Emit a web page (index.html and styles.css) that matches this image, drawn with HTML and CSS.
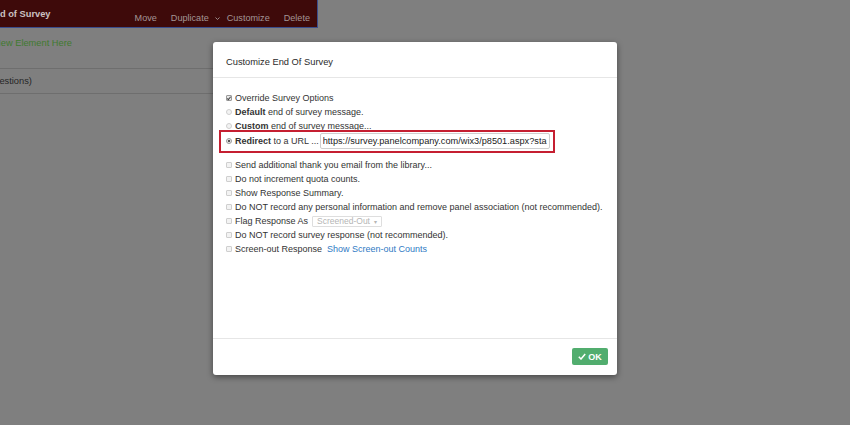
FILE: index.html
```html
<!DOCTYPE html>
<html lang="en">
<head>
    <meta charset="UTF-8">
    <meta name="viewport" content="width=device-width, initial-scale=1.0">
    <title>Customize End Of Survey</title>
    <link rel="stylesheet" href="styles.css">
</head>
<body>
    <div class="survey">
        <div class="block-bar">
            <span class="block-title">End of Survey</span>
            <div class="block-actions">
                <span>Move</span>
                <span>Duplicate</span>
                <svg class="caret" width="5" height="3" viewBox="0 0 5 3"><path d="M0.5 0.5 L2.5 2.5 L4.5 0.5" fill="none" stroke="#a49696" stroke-width="0.9"/></svg>
                <span>Customize</span>
                <span>Delete</span>
            </div>
        </div>
        <div class="insert">New Element Here</div>
        <div class="block-row"><span class="count">Questions)</span></div>
    </div>

    <div class="modal">
        <div class="modal-header">Customize End Of Survey</div>
        <div class="modal-body">
            <div class="opt-group">
                <div class="opt"><span class="box checked"></span>Override Survey Options</div>
                <div class="opt"><span class="radio"></span><b>Default</b>&nbsp;end of survey message.</div>
                <div class="opt"><span class="radio"></span><b>Custom</b>&nbsp;end of survey message...</div>
                <div class="opt redirect">
                    <span class="radio on"></span><b>Redirect</b>&nbsp;to a URL ...
                    <input class="url" type="text" readonly value="https://survey.panelcompany.com/wix3/p8501.aspx?sta">
                </div>
            </div>
            <div class="opt-group second">
                <div class="opt"><span class="box"></span>Send additional thank you email from the library...</div>
                <div class="opt"><span class="box"></span>Do not increment quota counts.</div>
                <div class="opt"><span class="box"></span>Show Response Summary.</div>
                <div class="opt"><span class="box"></span>Do NOT record any personal information and remove panel association (not recommended).</div>
                <div class="opt"><span class="box"></span>Flag Response As <span class="select">Screened-Out <span class="arrow">&#9662;</span></span></div>
                <div class="opt"><span class="box"></span>Do NOT record survey response (not recommended).</div>
                <div class="opt"><span class="box"></span>Screen-out Response <a href="#" class="link">Show Screen-out Counts</a></div>
            </div>
        </div>
        <div class="modal-footer">
            <button type="button" class="ok">
                <svg width="8" height="7" viewBox="0 0 8 7"><path d="M0.8 3.8 L3 6 L7.2 1" fill="none" stroke="#fff" stroke-width="1.5"/></svg>
                OK
            </button>
        </div>
    </div>
</body>
</html>
```

FILE: styles.css
```css
* {
    box-sizing: border-box;
    margin: 0;
    padding: 0;
    font-family: 'Liberation Sans', Arial, sans-serif;
}

body {
    background-color: #7f7f7f;
    width: 850px;
    height: 425px;
    overflow: hidden;
    position: relative;
    color: #333;
    font-size: 9px;
}

/* page behind the overlay */

.survey {
    width: 318px;
    overflow: hidden;
}

.block-bar {
    height: 28px;
    background-color: #3e0a0a;
    border-right: 1px solid #3b4d8c;
    border-bottom: 1px solid #3b4d8c;
    display: flex;
    justify-content: space-between;
    padding-right: 7px;
}

.block-title {
    margin-left: -12px;
    margin-top: 8px;
    font-weight: bold;
    font-size: 9.3px;
    line-height: 12px;
    color: #cbc2c2;
}

.block-actions {
    display: flex;
    align-items: center;
    gap: 14px;
    margin-top: 12px;
    height: 12px;
    font-size: 9.1px;
    color: #a49696;
}

.block-actions .caret {
    margin: 0 -7px 0 -8px;
}

.insert {
    margin-top: 8px;
    margin-left: -6px;
    line-height: 14px;
    font-size: 9.3px;
    color: #3f7a30;
}

.block-row {
    margin-top: 18px;
    height: 26px;
    border-top: 1px solid #6e6e6e;
    border-bottom: 1px solid #6e6e6e;
    padding-top: 6px;
    line-height: 12px;
    font-size: 9.3px;
    color: #262626;
}

.block-row .count {
    margin-left: -13px;
}

/* dialog */

.modal {
    position: absolute;
    left: 213px;
    top: 42px;
    width: 404px;
    height: 333px;
    background-color: #fff;
    border-radius: 3px;
    box-shadow: 0 2px 6px rgba(0, 0, 0, 0.45);
    display: flex;
    flex-direction: column;
}

.modal-header {
    height: 36px;
    border-bottom: 1px solid #e6e6e6;
    padding: 14px 13px 0;
    line-height: 12px;
    font-size: 9.3px;
    color: #2a2a2a;
}

.modal-body {
    flex: 1;
    padding: 13px 13px 0;
}

.opt {
    display: flex;
    align-items: center;
    height: 14px;
    white-space: nowrap;
    color: #333;
}

.opt b {
    font-weight: bold;
}

.box,
.radio {
    width: 6px;
    height: 6px;
    margin-right: 3px;
    border: 1px solid #cfcfcf;
    background-color: #f3f3f3;
    flex-shrink: 0;
}

.box {
    border-radius: 1px;
}

.box.checked {
    border-color: #9a9a9a;
    background-color: #e8e8e8;
    position: relative;
}

.box.checked::after {
    content: "";
    position: absolute;
    left: 1px;
    top: 0;
    width: 1px;
    height: 3px;
    border-right: 1px solid #444;
    border-bottom: 1px solid #444;
    transform: rotate(40deg);
}

.radio {
    border-radius: 50%;
}

.radio.on {
    border-color: #9a9a9a;
    background: radial-gradient(circle, #555 0 1.3px, #eee 1.6px);
}

.redirect {
    display: inline-flex;
    height: 23px;
    margin: -3px 0 0 -7px;
    padding: 1px 3px 2px 5px;
    border: 2px solid #c51f31;
}

.url {
    width: 230px;
    height: 16px;
    margin-left: 1px;
    padding: 0 2px;
    border: 1px solid #cfcfcf;
    border-radius: 2px;
    font-size: 9.2px;
    color: #222;
    outline: none;
}

.second {
    margin-top: 5px;
}

.select {
    display: inline-flex;
    align-items: center;
    height: 11px;
    margin-left: 4px;
    padding: 0 4px;
    border: 1px solid #dedede;
    border-radius: 1px;
    color: #b5b5b5;
    font-size: 8.5px;
    gap: 4px;
}

.select .arrow {
    font-size: 6px;
}

.link {
    margin-left: 5px;
    color: #2f7ac4;
    text-decoration: none;
}

.modal-footer {
    height: 37px;
    border-top: 1px solid #e6e6e6;
    display: flex;
    justify-content: flex-end;
    padding: 9px 9px 0;
}

.ok {
    width: 36px;
    height: 17px;
    border: none;
    border-radius: 2px;
    background-color: #51ad6e;
    color: #fff;
    font-size: 9px;
    font-weight: bold;
    display: flex;
    align-items: center;
    justify-content: center;
    gap: 2px;
}
```
